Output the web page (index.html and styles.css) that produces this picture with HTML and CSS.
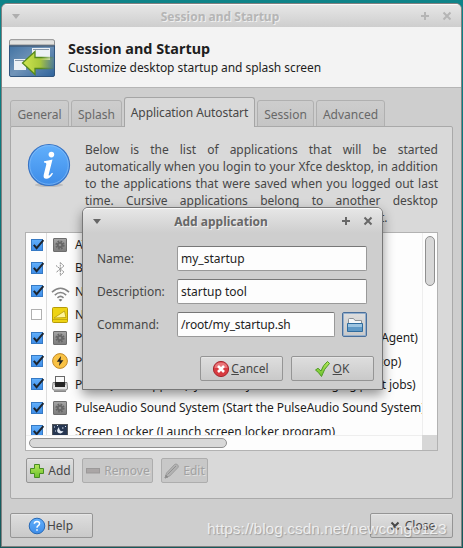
FILE: index.html
```html
<!DOCTYPE html>
<html lang="en">
<head>
    <meta charset="UTF-8">
    <title>Session and Startup</title>
    <link rel="stylesheet" href="styles.css">
</head>
<body>
    <svg class="defs" width="0" height="0">
        <defs>
            <linearGradient id="blue" x1="0" y1="0" x2="0" y2="1"><stop offset="0" stop-color="#62b0fc"/><stop offset="1" stop-color="#3d8ce8"/></linearGradient>
            <linearGradient id="navy" x1="0" y1="0" x2="1" y2="1"><stop offset="0" stop-color="#3b6ea0"/><stop offset=".5" stop-color="#7194b8"/><stop offset="1" stop-color="#2f639b"/></linearGradient>
            <linearGradient id="arrow" x1="0" y1="0" x2="1" y2="0"><stop offset="0" stop-color="#d0e650"/><stop offset=".55" stop-color="#a9c83c"/><stop offset="1" stop-color="#88a838" stop-opacity=".15"/></linearGradient>
            <linearGradient id="edge" gradientUnits="userSpaceOnUse" x1="14" y1="0" x2="46" y2="0"><stop offset="0" stop-color="#55881c"/><stop offset=".6" stop-color="#55881c"/><stop offset="1" stop-color="#55881c" stop-opacity=".1"/></linearGradient>
            <linearGradient id="green" x1="0" y1="0" x2="0" y2="1"><stop offset="0" stop-color="#b5e65a"/><stop offset="1" stop-color="#6cc22c"/></linearGradient>
            <linearGradient id="grey" x1="0" y1="0" x2="0" y2="1"><stop offset="0" stop-color="#a5a5a5"/><stop offset="1" stop-color="#7c7c7c"/></linearGradient>
            <symbol id="check" viewBox="0 0 14 14">
                <rect x=".5" y="1.5" width="11" height="11" fill="url(#blue)" stroke="#3579c4"/>
                <path d="M2.8 6.8L5.6 10.2L12.4 2.2" fill="none" stroke="#1c2530" stroke-width="2"/>
            </symbol>
            <symbol id="gear" viewBox="0 0 16 16">
                <rect x="1.5" y="1.5" width="13" height="13" rx=".5" fill="url(#grey)" stroke="#6d6d6d"/>
                <circle cx="8" cy="8" r="3.6" fill="none" stroke="#666" stroke-width="2" stroke-dasharray="1.7 1.13"/>
                <circle cx="8" cy="8" r="2.2" fill="none" stroke="#666" stroke-width="1.8"/>
            </symbol>
            <symbol id="plus" viewBox="0 0 10 10"><path d="M5 1V9M1 5H9" stroke="currentColor" stroke-width="2"/></symbol>
            <symbol id="cross" viewBox="0 0 10 10"><path d="M1.5 1.5L8.5 8.5M8.5 1.5L1.5 8.5" stroke="currentColor" stroke-width="2"/></symbol>
        </defs>
    </svg>

    <div class="window">
        <div class="titlebar">
            <span class="menu-arrow"></span>
            <span class="title">Session and Startup</span>
            <svg class="win-btn"><use href="#plus"/></svg>
            <svg class="win-btn"><use href="#cross"/></svg>
        </div>

        <div class="header">
            <svg class="header-icon" width="48" height="40" viewBox="0 0 48 40">
                <rect x="1.5" y="1.5" width="45" height="36" rx="1.5" fill="url(#navy)" stroke="#31557e"/>
                <path d="M1.5 6V2.5Q1.5 .7 3 .7H45Q46.5 .7 46.5 2.5V6Z" fill="#e2e2e0" stroke="#8e8e8e"/>
                <path d="M2 7H46" stroke="#3a4d63"/>
                <rect x="24" y="9" width="18" height="12" fill="#edf1f5"/>
                <path d="M25 10.5H41" stroke="#8898aa"/>
                <rect x="6" y="20" width="12" height="11" fill="#edf1f5"/>
                <path d="M7 21.5H16" stroke="#8898aa"/>
                <path d="M46 18.5H27V12.5L14.5 24L27 35.5V29.5H46Z" fill="url(#arrow)"/>
                <path d="M46 18.5H27V12.5L14.5 24L27 35.5V29.5H46" fill="none" stroke="url(#edge)" stroke-width="1.3"/>
            </svg>
            <div>
                <h1>Session and Startup</h1>
                <p>Customize desktop startup and splash screen</p>
            </div>
        </div>

        <div class="content">
            <div class="tabs">
                <div class="tab general">General</div>
                <div class="tab splash">Splash</div>
                <div class="tab active">Application Autostart</div>
                <div class="tab session">Session</div>
                <div class="tab advanced">Advanced</div>
            </div>

            <div class="panel">
                <div class="intro">
                    <svg class="info" width="44" height="45" viewBox="0 0 44 45">
                        <ellipse cx="22" cy="42" rx="14" ry="2" fill="#000" opacity=".13"/>
                        <circle cx="22" cy="22" r="20.5" fill="url(#blue)" stroke="#3974c4" stroke-width="1.2"/>
                        <circle cx="22" cy="22" r="19.3" fill="none" stroke="#85bdf8" stroke-width=".7"/>
                        <circle cx="24.4" cy="11.6" r="2.8" fill="#fff"/>
                        <path d="M17 18.3Q21 17.8 25.5 16.5L21.7 31.5Q21.4 33 22.4 32.4Q23.8 31.5 25 29.7L26 30.4Q23 35.7 19.3 35.7Q15.8 35.7 16.8 31.5L19.3 21.5Q19.7 19.6 17 19.5Z" fill="#fff"/>
                    </svg>
                    <p>Below is the list of applications that will be started automatically when you login to your Xfce desktop, in addition to the applications that were saved when you logged out last time. Cursive applications belong to another desktop <span class="last-line">environment, but you can still enable them if you want.</span></p>
                </div>

                <div class="list">
                    <div class="rows">
                        <div class="row"><svg class="cb"><use href="#check"/></svg><svg class="ic"><use href="#gear"/></svg><span>AT-SPI D-Bus Bus</span></div>
                        <div class="row"><svg class="cb"><use href="#check"/></svg>
                            <svg class="ic" viewBox="0 0 16 16"><path d="M4 5.5L12 12L8.3 15.5V2.5L12 6L4 12.5" fill="none" stroke="#8b8b8b" stroke-dasharray="2 .7"/></svg>
                            <span>Blueman Applet</span></div>
                        <div class="row"><svg class="cb"><use href="#check"/></svg>
                            <svg class="ic wifi" viewBox="0 0 20 16"><g fill="none" stroke="#858585" stroke-width="1.6"><path d="M1 6Q10-2 19 6"/><path d="M4 9.2Q10 3.5 16 9.2"/><path d="M6.8 12.1Q10 9 13.2 12.1"/></g><path d="M8 14Q10 12.4 12 14L10 16Z" fill="#777"/></svg>
                            <span>Network</span></div>
                        <div class="row"><span class="cb empty"></span>
                            <svg class="ic" viewBox="0 0 16 16"><rect x=".5" y=".5" width="15" height="15" rx="1" fill="#eed313" stroke="#b69b08"/><path d="M2 11L12.5 4L14 10.5Z" fill="#fff59b" stroke="#b69b08" stroke-width=".8"/><path d="M1 12.5H15" stroke="#c5aa0c"/></svg>
                            <span>Notes</span></div>
                        <div class="row"><svg class="cb"><use href="#check"/></svg><svg class="ic"><use href="#gear"/></svg><span class="tight">PolicyKit Authentication Agent (PolicyKit Authentication Agent)</span></div>
                        <div class="row"><svg class="cb"><use href="#check"/></svg>
                            <svg class="ic" viewBox="0 0 16 16"><circle cx="8" cy="8" r="7.4" fill="#f9c244" stroke="#c18a2a"/><path d="M9 3L4.8 8.7H7.6L7 13L11.4 7.2H8.5Z" fill="#252525"/></svg>
                            <span>Power Manager (Power management for the Xfce desktop)</span></div>
                        <div class="row"><svg class="cb"><use href="#check"/></svg>
                            <svg class="ic" viewBox="0 0 16 16"><rect x="3.5" y=".5" width="9" height="8" fill="#fafafa" stroke="#686868"/><path d="M1 6.5H3V9H13V6.5H15L15.5 12Q15.5 14 14 14H2Q.5 14 .5 12Z" fill="#e5e5e5" stroke="#666" stroke-width=".8"/><path d="M3 6H13V11H3Z" fill="#242424"/><path d="M2 15.2H14" stroke="#555"/></svg>
                            <span class="printer">Print Queue Applet (System tray icon for managing print jobs)</span></div>
                        <div class="row"><svg class="cb"><use href="#check"/></svg><svg class="ic"><use href="#gear"/></svg><span>PulseAudio Sound System (Start the PulseAudio Sound System)</span></div>
                        <div class="row"><svg class="cb"><use href="#check"/></svg>
                            <svg class="ic" viewBox="0 0 16 16"><path d="M0 1H16V13H0Z" fill="#50545a"/><path d="M1 2H15V12H1Z" fill="#263651"/><path d="M7 4Q7 9 11.5 8Q10 11.5 6.5 10Q3.5 8 7 4Z" fill="#e4ebf5"/><path d="M2 4H3M5 2.5H6M10 5H11.5M13 3.5H14M3 8H4" stroke="#dce5f2"/><path d="M5 13H11V15H5Z" fill="#44474b"/></svg>
                            <span class="locker">Screen Locker (Launch screen locker program)</span></div>
                    </div>
                    <div class="vscroll"><div class="thumb"></div></div>
                    <div class="hscroll"><div class="thumb"></div></div>
                    <div class="corner"></div>
                </div>

                <div class="actions">
                    <button class="add"><svg width="16" height="16" viewBox="0 0 16 16"><path d="M5.5 1.5H10.5V5.5H14.5V10.5H10.5V14.5H5.5V10.5H1.5V5.5H5.5Z" fill="url(#green)" stroke="#498c24"/></svg>Add</button>
                    <button class="remove disabled"><svg width="16" height="16" viewBox="0 0 16 16"><rect x="1.5" y="5.5" width="13" height="4.5" fill="#aaa6a6" stroke="#9b9999"/></svg>Remove</button>
                    <button class="edit disabled"><svg width="16" height="16" viewBox="0 0 16 16"><path d="M1 15L2.5 10L10.5 1.5Q12 .3 13.5 1.7Q15 3.2 14 4.5L5.8 13Z" fill="#b2b2b2" stroke="#979797" stroke-width=".8"/><path d="M3.5 11.5L12 3M1 15L2 12L4 14Z" stroke="#909090" fill="#888"/></svg>Edit</button>
                </div>
            </div>

            <div class="footer">
                <button class="wide"><svg width="18" height="18" viewBox="0 0 18 18"><circle cx="9" cy="9" r="7.8" fill="url(#blue)" stroke="#2869b5"/><path d="M6.3 6.8Q6.5 4.5 9 4.5Q11.7 4.5 11.5 6.8Q11.4 8 10 8.8Q9 9.5 9 10.8M9 12.2V13.8" fill="none" stroke="#fff" stroke-width="1.5"/></svg>Help</button>
                <button class="wide close"><svg width="10" height="10"><use href="#cross"/></svg>Close</button>
            </div>
        </div>
    </div>

    <div class="dialog">
        <div class="titlebar">
            <span class="menu-arrow"></span>
            <span class="title">Add application</span>
            <svg class="win-btn"><use href="#plus"/></svg>
            <svg class="win-btn"><use href="#cross"/></svg>
        </div>
        <div class="form">
            <label>Name:</label><div class="field">my_startup</div>
            <label>Description:</label><div class="field">startup tool</div>
            <label>Command:</label>
            <div class="command">
                <div class="field path">/root/my_startup.sh</div>
                <button class="browse"><svg width="18" height="16" viewBox="0 0 18 16"><path d="M2.5 13V2.5Q2.5 1.5 3.5 1.5H7.5L9 3.5H15.5V13Z" fill="#f5f7f8" stroke="#8c9297"/><path d="M1.5 6.5H16.5V14.5H1.5Z" fill="#5f99c6" stroke="#2f6c9e"/><path d="M2 7H16V10H2Z" fill="#9cc4e1"/></svg></button>
            </div>
        </div>
        <div class="dialog-actions">
            <button class="wide"><svg width="18" height="18" viewBox="0 0 18 18"><circle cx="9" cy="9" r="7.6" fill="#d83b40" stroke="#a52830"/><path d="M2.5 8Q3 2.5 9 2.5Q15 2.5 15.5 8Z" fill="#e9767a"/><path d="M6 6L12 12M12 6L6 12" stroke="#fff" stroke-width="2.6"/></svg><span><u>C</u>ancel</span></button>
            <button class="wide"><svg width="18" height="18" viewBox="0 0 18 18"><path d="M1.5 10L4 8.3L7 11Q9 5 13.5 1.5L15.5 3.5Q10 8.5 7.5 16.5Q4.5 12 1.5 10Z" fill="url(#green)" stroke="#4b9a20"/></svg><span><u>O</u>K</span></button>
        </div>
    </div>

    <div class="watermark">https://blog.csdn.net/newcongo123</div>
</body>
</html>
```
FILE: styles.css
```css
* {
    box-sizing: border-box;
    margin: 0;
    padding: 0;
}

body {
    width: 463px;
    height: 548px;
    padding: 3px 1px 1px;
    overflow: hidden;
    position: relative;
    background: linear-gradient(#0e8489, #0b7479 40%, #17595b);
    font-family: "Noto Sans", sans-serif;
    font-size: 12px;
    line-height: 17px;
    color: #474747;
}

svg {
    flex: none;
    display: block;
}

.defs {
    position: absolute;
}

.window {
    height: 544px;
    border: 1px solid #808080;
    border-radius: 6px 6px 0 0;
    background: #cecece;
    overflow: hidden;
    display: flex;
    flex-direction: column;
}

.titlebar {
    height: 23px;
    flex: none;
    display: flex;
    align-items: center;
    padding: 0 9px 0 10px;
    gap: 12px;
    background: linear-gradient(#e6e6e6, #cecece);
    border-top: 1px solid #fafafa;
    color: #b5b5b5;
    text-shadow: 1px 1px 0 #efefef;
}

.title {
    flex: 1;
    text-align: center;
    font-weight: bold;
}

.menu-arrow {
    border: 4px solid transparent;
    border-top: 5px solid #aeaeae;
    border-bottom: 0;
}

.win-btn {
    width: 10px;
    height: 10px;
}

.header {
    height: 61px;
    flex: none;
    background: #f3f3f3;
    border-bottom: 1px solid #b5b5b5;
    padding: 12px 0 0 6px;
    display: flex;
    gap: 12px;
    color: #1e1e1e;
}

.header h1 {
    font-size: 14.4px;
    line-height: 19px;
}

.header p {
    letter-spacing: -.06px;
    padding-top: 1px;
}

.content {
    flex: 1;
    display: flex;
    flex-direction: column;
    padding: 9px 8px 8px;
}

.tabs {
    height: 30px;
    flex: none;
    display: flex;
    align-items: flex-end;
    gap: 2px;
    margin-bottom: -1px;
}

.tab {
    height: 27px;
    border: 1px solid #b0b0b0;
    border-radius: 3px 3px 0 0;
    background: linear-gradient(#cdcdcd, #c5c5c5);
    text-align: center;
    line-height: 27px;
    color: #686868;
    white-space: nowrap;
}

.general { width: 59px; }
.splash { width: 51px; }
.session { width: 57px; }
.advanced { width: 69px; }

.tab.active {
    width: 131px;
    height: 30px;
    line-height: 29px;
    background: #d9d9d9;
    border-color: #a5a5a5;
    border-bottom: 0;
    color: #474747;
    letter-spacing: -.08px;
    z-index: 1;
}

.panel {
    height: 373px;
    flex: none;
    border: 1px solid #a9a9a9;
    border-radius: 2px;
    background: #d9d9d9;
    padding: 14px 14px 0 15px;
}

.intro {
    height: 91px;
    display: flex;
    gap: 14px;
    padding-left: 1px;
}

.info {
    margin-top: 2px;
}

.intro p {
    flex: 1;
    text-align: justify;
}

.last-line {
    letter-spacing: -.14px;
}

.list {
    width: 413px;
    height: 219px;
    margin-left: -1px;
    border: 1px solid #b2b2b2;
    background: #fdfdfd;
    display: grid;
    grid-template: 202px 15px / 396px 15px;
    overflow: hidden;
}

.rows {
    overflow: hidden;
    background: linear-gradient(90deg, transparent 20px, #ddd 20px, #ddd 21px, transparent 21px);
    color: #1e1e1e;
    letter-spacing: -.08px;
}

.row {
    height: 23.3px;
    display: flex;
    align-items: center;
    white-space: nowrap;
    padding-left: 5px;
}

.tight {
    letter-spacing: -.13px;
}

.printer {
    letter-spacing: -.11px;
}

.locker {
    letter-spacing: 0;
}

.cb {
    width: 14px;
    height: 14px;
    margin-right: 7px;
}

.cb.empty {
    width: 11px;
    height: 11px;
    margin-right: 10px;
    border: 1px solid #b0b0b0;
    background: #fff;
}

.ic {
    width: 16px;
    height: 16px;
    margin-right: 7px;
}

.ic.wifi {
    width: 19px;
    margin: 5px 5px 0 -1px;
}

.vscroll {
    border-left: 1px solid #eee;
    padding: 3px 2px;
}

.thumb {
    border: 1px solid #8f8f8f;
    border-radius: 5px;
    background: #d8d8d8;
}

.vscroll .thumb {
    width: 10px;
    height: 50px;
}

.hscroll {
    border-top: 1px solid #eee;
    padding: 2px 3px;
}

.hscroll .thumb {
    width: 198px;
    height: 10px;
}

.corner {
    background: #d7d7d7;
}

.actions {
    display: flex;
    gap: 8px;
    margin-top: 7px;
}

button {
    height: 25px;
    border: 1px solid #959595;
    border-radius: 2px;
    background: linear-gradient(#dedede, #c9c9c9);
    box-shadow: inset 0 1px 0 #e6e6e6;
    font: inherit;
    color: #474747;
    display: flex;
    align-items: center;
    justify-content: center;
    gap: 3px;
}

.add { width: 48px; }
.remove { width: 71px; }
.edit { width: 47px; }

.disabled {
    background: #c8c8c8;
    border-color: #adadad;
    box-shadow: none;
    color: #a1a1a1;
    text-shadow: 1px 1px 0 #e0e0e0;
}

.footer {
    display: flex;
    justify-content: space-between;
    margin-top: 14px;
}

.wide {
    width: 83px;
    gap: 1px;
    padding-right: 2px;
}

.close {
    gap: 5px;
    padding: 0 0 0 2px;
}

.dialog {
    position: absolute;
    left: 82px;
    top: 207px;
    width: 301px;
    height: 183px;
    border: 1px solid #777;
    border-radius: 6px 6px 0 0;
    background: #cecece;
    box-shadow: 0 5px 12px rgba(0, 0, 0, .42);
}

.dialog .titlebar {
    height: 25px;
    border-radius: 5px 5px 0 0;
    color: #686868;
}

.dialog .menu-arrow {
    border-top-color: #666;
}

.form {
    display: grid;
    grid-template-columns: 80px 190px;
    grid-auto-rows: 25px;
    row-gap: 8px;
    padding: 13px 0 0 14px;
    align-items: center;
}

.field {
    height: 25px;
    border: 1px solid #999;
    border-top-color: #777;
    border-radius: 2px;
    background: #fdfdfd;
    color: #1e1e1e;
    padding-left: 3px;
    line-height: 23px;
}

.path {
    letter-spacing: -.15px;
}

.command {
    display: flex;
    justify-content: space-between;
}

.command .field {
    width: 158px;
}

.browse {
    width: 25px;
    border-color: #496f9b;
    box-shadow: inset 0 0 0 1px #94afcc;
}

.dialog-actions {
    display: flex;
    justify-content: flex-end;
    gap: 8px;
    padding: 19px 8px 0 0;
}

.watermark {
    position: absolute;
    left: 207px;
    top: 518px;
    font: 15.5px/22px "Liberation Sans", sans-serif;
    color: rgba(255, 255, 255, .75);
    text-shadow: 1px 1px 1px rgba(90, 90, 90, .4);
    white-space: nowrap;
}
```
